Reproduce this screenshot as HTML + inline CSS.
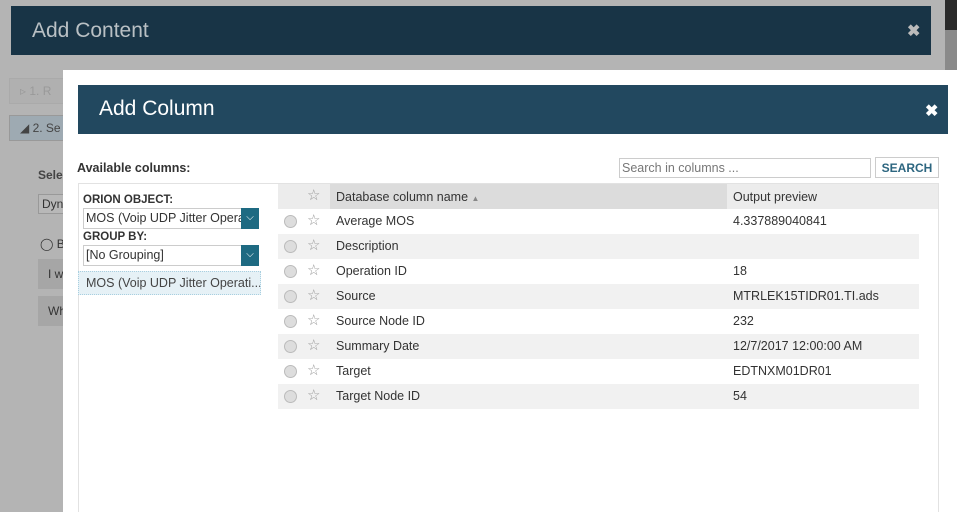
<!DOCTYPE html>
<html style="overflow:hidden"><head><meta charset="utf-8"><style>
*{box-sizing:border-box;margin:0;padding:0}
html,body{width:957px;height:512px;overflow:hidden}
body{background:#b4b4b4;font-family:"Liberation Sans",sans-serif;position:relative;font-size:13px;color:#333}
.abs{position:absolute;white-space:nowrap;overflow:hidden}
.x{color:#fff;font-weight:bold;font-size:16px}
.row{position:absolute;left:278px;width:641px;height:25px;font-size:12.5px;color:#333}
.row.alt{background:#f1f1f1}
.row span{position:absolute;top:5px}
.rad{position:absolute;left:6px;top:6px;width:13px;height:13px;border-radius:50%;background:#ddd;border:1px solid #bbb}
.st{position:absolute;left:29px;top:2px;color:#999;font-size:15px}
</style></head><body>
<div class="abs" style="left:945px;top:0;width:12px;height:30px;background:#2a2a2a"></div>
<div class="abs" style="left:945px;top:30px;width:12px;height:40px;background:#8a8a8a"></div>
<div class="abs" style="left:11px;top:6px;width:920px;height:49px;background:#183446"></div>
<div class="abs" style="left:32px;top:19px;font-size:21px;color:#b9c0c4">Add Content</div>
<div class="abs x" style="left:907px;top:21px;color:#bbb">✖</div>
<div class="abs" style="left:9px;top:78px;width:60px;height:26px;border:1px solid #aaa;background:#b0b0b0;color:#999;padding:5px 10px;font-size:12px">▹ 1. R</div>
<div class="abs" style="left:9px;top:115px;width:60px;height:26px;border:1px solid #999;background:#9eaab2;color:#444;padding:5px 10px;font-size:12px">◢ 2. Se</div>
<div class="abs" style="left:38px;top:168px;font-weight:bold;font-size:12px;color:#444">Sele</div>
<div class="abs" style="left:38px;top:194px;width:30px;height:20px;border:1px solid #999;background:#b8b8b8;font-size:12px;padding:2px 3px">Dyn</div>
<div class="abs" style="left:40px;top:237px;font-size:12px">◯ B</div>
<div class="abs" style="left:38px;top:259px;width:30px;height:30px;background:#a6a6a6;padding:8px 10px;font-size:12px">I w</div>
<div class="abs" style="left:38px;top:296px;width:30px;height:30px;background:#a6a6a6;padding:8px 10px;font-size:12px">Wh</div>

<div class="abs" style="left:63px;top:70px;width:894px;height:442px;background:#fff"></div>
<div class="abs" style="left:78px;top:85px;width:870px;height:49px;background:#22485f"></div>
<div class="abs" style="left:99px;top:97px;font-size:21px;color:#fff">Add Column</div>
<div class="abs x" style="left:925px;top:101px">✖</div>
<div class="abs" style="left:77px;top:161px;font-weight:bold;font-size:12.5px;color:#333">Available columns:</div>
<div class="abs" style="left:619px;top:158px;width:252px;height:20px;border:1px solid #ccc;font-size:12.5px;color:#777;padding:2px 2px">Search in columns ...</div>
<div class="abs" style="left:875px;top:157px;width:64px;height:21px;border:1px solid #ccc;font-size:12px;font-weight:bold;color:#2d6680;text-align:center;padding-top:3px">SEARCH</div>

<div class="abs" style="left:78px;top:183px;width:861px;height:329px;border:1px solid #e2e2e2;border-bottom:none"></div>
<div class="abs" style="left:83px;top:194px;font-weight:bold;font-size:11.5px;color:#333">ORION OBJECT:</div>
<div class="abs" style="left:83px;top:208px;width:176px;height:21px;border:1px solid #ccc;font-size:12.5px;padding:2px 2px;color:#333">MOS (Voip UDP Jitter Operation</div>
<div class="abs" style="left:241px;top:208px;width:18px;height:21px;background:#1e6a82;color:#fff;text-align:center;font-size:10px;padding-top:4px">⌵</div>
<div class="abs" style="left:83px;top:231px;font-weight:bold;font-size:11.5px">GROUP BY:</div>
<div class="abs" style="left:83px;top:245px;width:176px;height:21px;border:1px solid #ccc;font-size:12.5px;padding:2px 2px">[No Grouping]</div>
<div class="abs" style="left:241px;top:245px;width:18px;height:21px;background:#1e6a82;color:#fff;text-align:center;font-size:10px;padding-top:4px">⌵</div>
<div class="abs" style="left:78px;top:271px;width:183px;height:24px;background:#e6f1f6;border:1px dotted #a8cfe0;font-size:12.5px;color:#444;padding:4px 7px">MOS (Voip UDP Jitter Operati...</div>

<div class="abs" style="left:278px;top:184px;width:660px;height:25px;background:#ececec"></div>
<div class="abs" style="left:330px;top:184px;width:397px;height:25px;background:#dcdcdc"></div>
<div class="abs" style="left:307px;top:186px;color:#999;font-size:15px">☆</div>
<div class="abs" style="left:336px;top:190px;font-size:12.5px">Database column name <span style="font-size:8px;color:#888">▲</span></div>
<div class="abs" style="left:733px;top:190px;font-size:12.5px">Output preview</div>

<div class="row" style="top:209px"><div class="rad"></div><div class="st">☆</div><span style="left:58px">Average MOS</span><span style="left:455px">4.337889040841</span></div>
<div class="row alt" style="top:234px"><div class="rad"></div><div class="st">☆</div><span style="left:58px">Description</span></div>
<div class="row" style="top:259px"><div class="rad"></div><div class="st">☆</div><span style="left:58px">Operation ID</span><span style="left:455px">18</span></div>
<div class="row alt" style="top:284px"><div class="rad"></div><div class="st">☆</div><span style="left:58px">Source</span><span style="left:455px">MTRLEK15TIDR01.TI.ads</span></div>
<div class="row" style="top:309px"><div class="rad"></div><div class="st">☆</div><span style="left:58px">Source Node ID</span><span style="left:455px">232</span></div>
<div class="row alt" style="top:334px"><div class="rad"></div><div class="st">☆</div><span style="left:58px">Summary Date</span><span style="left:455px">12/7/2017 12:00:00 AM</span></div>
<div class="row" style="top:359px"><div class="rad"></div><div class="st">☆</div><span style="left:58px">Target</span><span style="left:455px">EDTNXM01DR01</span></div>
<div class="row alt" style="top:384px"><div class="rad"></div><div class="st">☆</div><span style="left:58px">Target Node ID</span><span style="left:455px">54</span></div>
</body></html>
